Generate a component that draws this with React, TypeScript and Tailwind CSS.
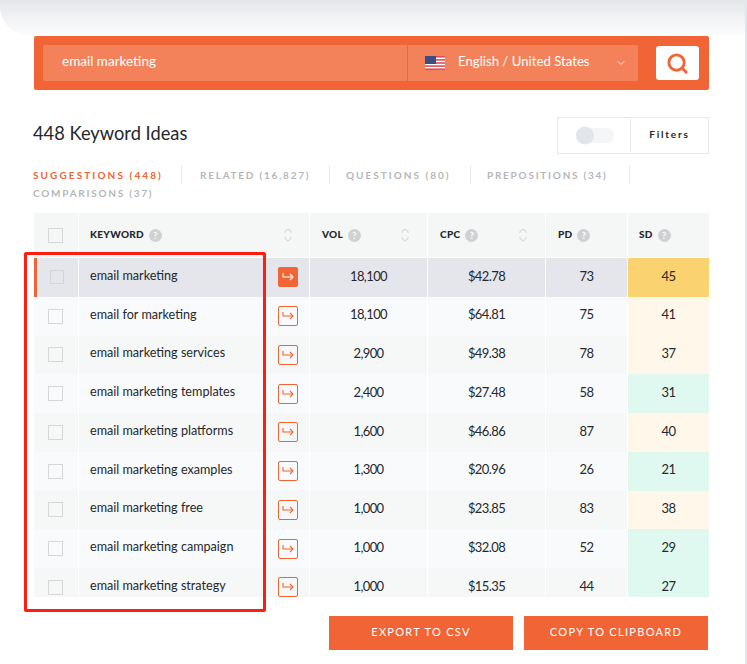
import { Search, ChevronDown } from "lucide-react";

type Row = { keyword: string; vol: string; cpc: string; pd: number; sd: number };

const rows: Row[] = [
  { keyword: "email marketing", vol: "18,100", cpc: "$42.78", pd: 73, sd: 45 },
  { keyword: "email for marketing", vol: "18,100", cpc: "$64.81", pd: 75, sd: 41 },
  { keyword: "email marketing services", vol: "2,900", cpc: "$49.38", pd: 78, sd: 37 },
  { keyword: "email marketing templates", vol: "2,400", cpc: "$27.48", pd: 58, sd: 31 },
  { keyword: "email marketing platforms", vol: "1,600", cpc: "$46.86", pd: 87, sd: 40 },
  { keyword: "email marketing examples", vol: "1,300", cpc: "$20.96", pd: 26, sd: 21 },
  { keyword: "email marketing free", vol: "1,000", cpc: "$23.85", pd: 83, sd: 38 },
  { keyword: "email marketing campaign", vol: "1,000", cpc: "$32.08", pd: 52, sd: 29 },
  { keyword: "email marketing strategy", vol: "1,000", cpc: "$15.35", pd: 44, sd: 27 },
];

const tabs = ["SUGGESTIONS (448)", "RELATED (16,827)", "QUESTIONS (80)", "PREPOSITIONS (34)"];

function Help() {
  return (
    <span className="flex h-[13px] w-[13px] items-center justify-center rounded-full bg-[#cfd1d3] text-[9px] font-bold leading-none text-white">
      ?
    </span>
  );
}

function Sort() {
  return (
    <svg width="8" height="14" viewBox="0 0 8 14" fill="none" stroke="#d9dbdd" strokeWidth="1.2">
      <path d="M1 5 V3.5 L4 1 L7 3.5 V5" />
      <path d="M1 9 V10.5 L4 13 L7 10.5 V9" />
    </svg>
  );
}

function Arrow({ active }: { active: boolean }) {
  return (
    <span
      className={
        active
          ? "flex h-[20px] w-[20px] items-center justify-center rounded-[2px] border border-[#f06435] bg-[#f06435] text-white"
          : "flex h-[20px] w-[20px] items-center justify-center rounded-[2px] border border-[#f06435] text-[#f06435]"
      }
    >
      <svg width="12" height="10" viewBox="0 0 12 10" fill="none" stroke="currentColor" strokeWidth="1.1">
        <path d="M1 1 V5 H11" />
        <path d="M8 2 L11 5 L8 8" />
      </svg>
    </span>
  );
}

function Flag() {
  return (
    <svg width="20" height="14" viewBox="0 0 20 14">
      <rect width="20" height="14" fill="#fff" />
      <rect y="0" width="20" height="1.6" fill="#d9505a" />
      <rect y="3.1" width="20" height="1.6" fill="#d9505a" />
      <rect y="6.2" width="20" height="1.6" fill="#d9505a" />
      <rect y="9.3" width="20" height="1.6" fill="#d9505a" />
      <rect y="12.4" width="20" height="1.6" fill="#d9505a" />
      <rect width="11" height="8" fill="#3c4f7f" />
    </svg>
  );
}

function sdColor(sd: number, active: boolean) {
  if (active) return "bg-[#fad26f]";
  return sd >= 35 ? "bg-[#fff8ea]" : "bg-[#e0f9f0]";
}

export default function App() {
  return (
    <div className="relative h-[664px] w-[747px] overflow-hidden bg-white font-['Lato',sans-serif] text-[#24282c]">
      <div className="h-[36px] rounded-bl-[30px] bg-gradient-to-b from-[#e3e5e8] via-[#f1f2f4] to-[#fdfdfe]" />

      <div className="px-[34px] pr-[38px]">
        {/* search */}
        <div className="flex h-[54px] items-center rounded-[2px] bg-[#f06435] pl-[9px] pr-[10px]">
          <div className="flex h-[36px] w-[364px] items-center rounded-l-[2px] bg-[#f3825b] pb-[4px] pl-[19px] text-[13.5px] text-white">
            email marketing
          </div>
          <div className="ml-px flex h-[36px] w-[230px] items-center rounded-r-[2px] bg-[#f3825b] pl-[17px] text-[13.2px] text-white">
            <Flag />
            <span className="mb-[3px] ml-[13px]">English / United States</span>
            <ChevronDown className="ml-auto mr-[11px] h-[12px] w-[12px]" strokeWidth={1.5} />
          </div>
          <div className="ml-auto flex h-[34px] w-[43px] items-center justify-center rounded-[3px] bg-white">
            <Search className="h-[23px] w-[23px] text-[#f06435]" strokeWidth={3} />
          </div>
        </div>

        {/* heading */}
        <div className="mt-[27px] flex h-[37px] items-center justify-between">
          <h1 className="-ml-px pb-[4px] text-[18.3px] leading-none">448 Keyword Ideas</h1>
          <div className="flex h-[37px] w-[152px] items-center border border-[#e6e8ec]">
            <div className="flex h-[33px] w-[73px] items-center border-r border-[#e6e8ec] pl-[18px]">
              <div className="h-[15px] w-[38px] rounded-full bg-[#f5f6f7]">
                <div className="h-[18px] w-[18px] -translate-y-[1.5px] rounded-full bg-[#e2e5ea]" />
              </div>
            </div>
            <span className="flex-1 pb-[2px] text-center text-[10px] font-bold tracking-[1.8px]">Filters</span>
          </div>
        </div>

        {/* tabs */}
        <div className="mt-[12px] flex flex-wrap text-[10px] font-bold leading-[18px] tracking-[1.75px] text-[#b5b7ba]">
          {tabs.map((t, i) => (
            <span
              key={t}
              className={
                i === 0
                  ? "-ml-px w-[149px] border-r border-[#e6e8ec] tracking-[2.1px] text-[#f06435]"
                  : i === 1
                    ? "w-[148px] border-r border-[#e6e8ec] pl-[18px]"
                    : i === 2
                      ? "w-[141px] border-r border-[#e6e8ec] pl-[16px] tracking-[2px]"
                      : "w-[159px] border-r border-[#e6e8ec] pl-[16px]"
              }
            >
              {t}
            </span>
          ))}
          <span className="-ml-px w-full">COMPARISONS (37)</span>
        </div>

        {/* table */}
        <div className="mt-[11px] h-[384px] w-[675px] overflow-hidden">
          <div className="grid h-[45px] grid-cols-[44px_231px_118px_118px_82px_82px] border-b border-white bg-[#f5f6f6] text-[10px] font-black tracking-[0.3px] text-[#22262a]">
            <div className="flex items-center pl-[14px]">
              <span className="h-[15px] w-[15px] border border-[#d5d7d9]" />
            </div>
            <div className="flex items-center gap-[5px] border-l border-white pl-[11px]">
              <span className="pb-[2px]">KEYWORD</span> <Help />
              <span className="ml-auto mr-[17px]"><Sort /></span>
            </div>
            <div className="flex items-center gap-[5px] border-l border-white pl-[12px]">
              <span className="pb-[2px]">VOL</span> <Help />
              <span className="ml-auto mr-[18px]"><Sort /></span>
            </div>
            <div className="flex items-center gap-[5px] border-l border-white pl-[12px]">
              <span className="pb-[2px]">CPC</span> <Help />
              <span className="ml-auto mr-[18px]"><Sort /></span>
            </div>
            <div className="flex items-center gap-[5px] border-l border-white pl-[12px]">
              <span className="pb-[2px]">PD</span> <Help />
            </div>
            <div className="flex items-center gap-[5px] border-l border-white pl-[11px]">
              <span className="pb-[2px]">SD</span> <Help />
            </div>
          </div>

          {rows.map((r, i) => {
            const active = i === 0;
            const bg = active ? "bg-[#e4e6eb]" : i % 2 === 1 ? "bg-[#f9fafc]" : "bg-[#f6f7f7]";
            return (
              <div
                key={r.keyword}
                className={`grid h-[38.75px] grid-cols-[44px_231px_118px_118px_82px_82px] text-[12.6px] ${bg}`}
              >
                <div className={active ? "flex items-center border-l-[3px] border-[#f06435] pl-[13px]" : "flex items-center pl-[14px]"}>
                  <span
                    className={
                      active
                        ? "h-[14px] w-[14px] border border-[#d3d5d9]"
                        : "h-[15px] w-[15px] border border-[#d5d7d9]"
                    }
                  />
                </div>
                <div className="flex items-center border-l border-white pl-[11px] pr-[11px]">
                  <span className="pb-[2px]">{r.keyword}</span>
                  <span className="ml-auto"><Arrow active={active} /></span>
                </div>
                <div className="flex items-center justify-center border-l border-white pb-[2px] text-[13px] tracking-[-0.6px]">{r.vol}</div>
                <div className="flex items-center justify-center border-l border-white pb-[2px] text-[13px] tracking-[-0.6px]">{r.cpc}</div>
                <div className="flex items-center justify-center border-l border-white pb-[2px] text-[13px] tracking-[-0.6px]">{r.pd}</div>
                <div className={`flex items-center justify-center border-l border-white pb-[2px] text-[13px] tracking-[-0.6px] ${sdColor(r.sd, active)}`}>{r.sd}</div>
              </div>
            );
          })}
        </div>

        {/* export */}
        <div className="mt-[19px] flex justify-end gap-[11px] pr-px text-[11px] tracking-[1.3px] text-white">
          <button className="h-[34px] w-[184px] bg-[#f06435] pb-[2px]">EXPORT TO CSV</button>
          <button className="h-[34px] w-[184px] bg-[#f06435] pb-[2px]">COPY TO CLIPBOARD</button>
        </div>
      </div>

      {/* scrollbar edge */}
      <div className="absolute right-0 top-0 h-full w-[2px] bg-[#e2e5ea]" />

      {/* red annotation */}
      <div className="pointer-events-none absolute left-[24px] top-[252px] h-[360px] w-[242px] rounded-[2px] border-[3px] border-[#fb1f10]" />
    </div>
  );
}
